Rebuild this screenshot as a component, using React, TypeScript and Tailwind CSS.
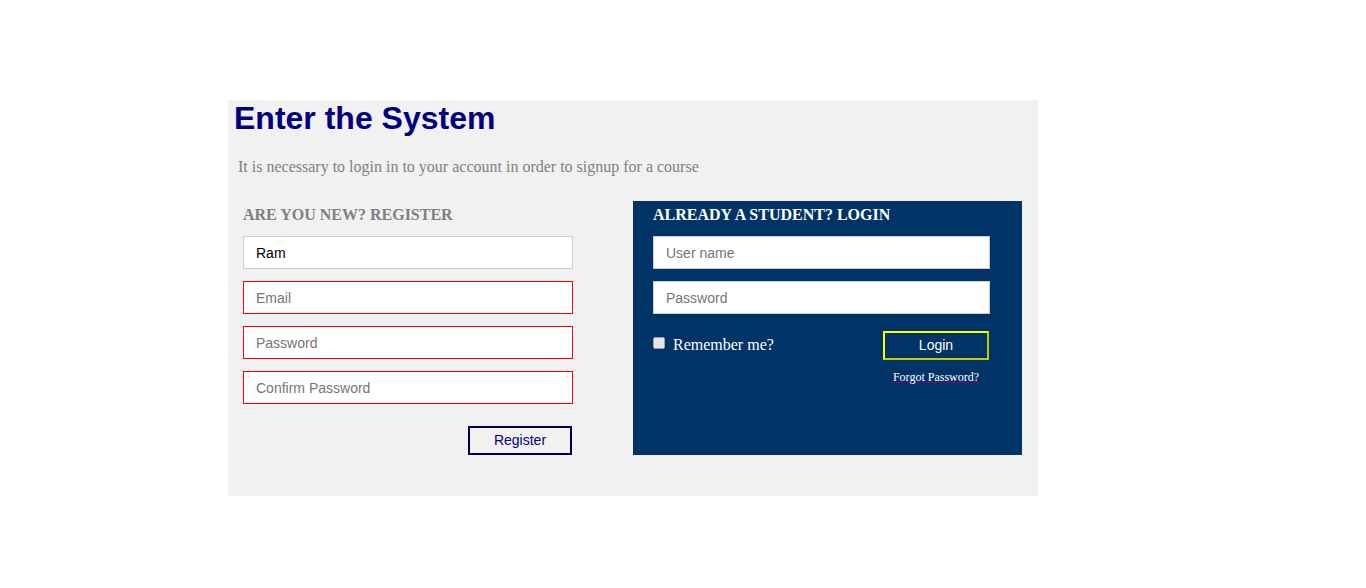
import React from "react";

const inputBase =
  "h-[33px] bg-white border px-[12px] text-[14px] text-black outline-none placeholder:text-[#757575] font-['Liberation_Sans',Arial,sans-serif]";

export default function App() {
  return (
    <div className="w-[1366px] h-[588px] bg-white font-['Liberation_Sans',Arial,sans-serif]">
      <div className="ml-[228px] pt-[100px]">
        <div className="w-[810px] bg-[#f1f1f1] pb-[41px]">
          <h1 className="pl-[6px] text-[32px] leading-[37px] font-bold text-[#000080]">
            Enter the System
          </h1>
          <p className="pl-[10px] mt-[21px] text-[16px] leading-[18px] text-[#808080] font-['Liberation_Serif','Times_New_Roman',serif]">
            It is necessary to login in to your account in order to signup for a course
          </p>
          <div className="flex items-start mt-[25px] pl-[15px]">
            <div className="w-[330px] pt-[5px]">
              <h4 className="text-[16px] leading-[18px] font-bold text-[#808080] uppercase font-['Liberation_Serif','Times_New_Roman',serif]">
                Are you new? Register
              </h4>
              <div className="flex flex-col gap-[12px] mt-[12px]">
                <input className={`${inputBase} w-[330px] border-[#cccccc]`} defaultValue="Ram" />
                <input className={`${inputBase} w-[330px] border-[#ff0000]`} placeholder="Email" />
                <input className={`${inputBase} w-[330px] border-[#ff0000]`} placeholder="Password" />
                <input
                  className={`${inputBase} w-[330px] border-[#ff0000]`}
                  placeholder="Confirm Password"
                />
              </div>
              <div className="flex justify-end mt-[22px] pr-[1px]">
                <button className="w-[104px] h-[29px] border-2 border-[#000050] bg-[#f1f1f1] text-[14px] text-[#000080]">
                  Register
                </button>
              </div>
            </div>
            <div className="ml-[60px] w-[389px] h-[254px] bg-[#003366] pt-[5px] pl-[20px]">
              <h4 className="text-[16px] leading-[18px] font-bold text-white uppercase font-['Liberation_Serif','Times_New_Roman',serif]">
                Already a student? Login
              </h4>
              <div className="flex flex-col gap-[12px] mt-[12px]">
                <input className={`${inputBase} w-[337px] border-[#cccccc]`} placeholder="User name" />
                <input className={`${inputBase} w-[337px] border-[#cccccc]`} placeholder="Password" />
              </div>
              <div className="flex w-[336px] justify-between mt-[17px]">
                <label className="flex items-start gap-[8px] text-white text-[16px] leading-[20px] pt-[4px] font-['Liberation_Serif','Times_New_Roman',serif]">
                  <span className="mt-[2px] w-[12px] h-[12px] bg-[#e6e6e6] border border-[#a0a0a0] rounded-[2px]" />
                  Remember me?
                </label>
                <div className="flex flex-col items-center w-[106px]">
                  <button className="w-[106px] h-[29px] border-2 border-t-[#ffff00] border-l-[#ffff00] border-r-[#c8c800] border-b-[#c8c800] bg-[#003366] text-[14px] text-white">
                    Login
                  </button>
                  <a className="mt-[10px] text-[12px] leading-[14px] text-white underline decoration-[#800080] font-['Liberation_Serif','Times_New_Roman',serif]">
                    Forgot Password?
                  </a>
                </div>
              </div>
            </div>
          </div>
        </div>
      </div>
    </div>
  );
}
